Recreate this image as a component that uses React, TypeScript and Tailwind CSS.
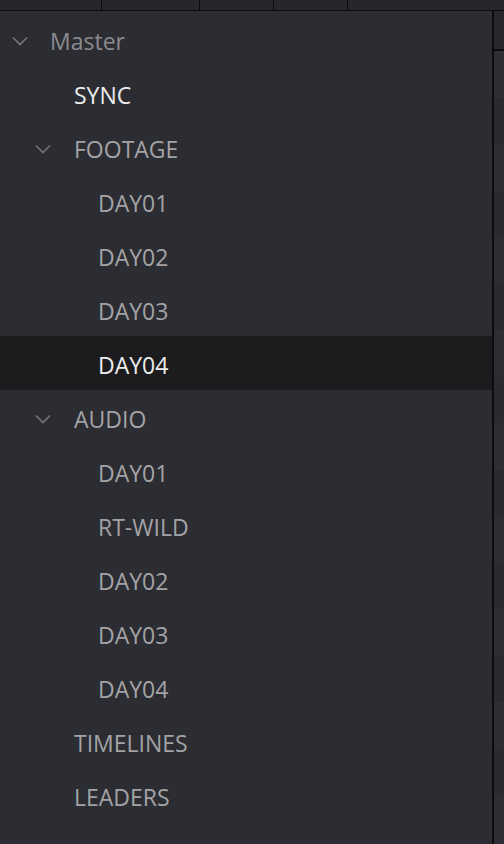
type Item = { label: string; level: number; open?: boolean; active?: boolean; selected?: boolean; dim?: boolean }

const items: Item[] = [
  { label: 'Master', level: 0, open: true, dim: true },
  { label: 'SYNC', level: 1, active: true },
  { label: 'FOOTAGE', level: 1, open: true },
  { label: 'DAY01', level: 2 },
  { label: 'DAY02', level: 2 },
  { label: 'DAY03', level: 2 },
  { label: 'DAY04', level: 2, selected: true },
  { label: 'AUDIO', level: 1, open: true },
  { label: 'DAY01', level: 2 },
  { label: 'RT-WILD', level: 2 },
  { label: 'DAY02', level: 2 },
  { label: 'DAY03', level: 2 },
  { label: 'DAY04', level: 2 },
  { label: 'TIMELINES', level: 1 },
  { label: 'LEADERS', level: 1 },
]

const Chevron = () => (
  <svg width="16" height="10" viewBox="0 0 16 10" fill="none">
    <path d="M1 1.5L8 8.5L15 1.5" stroke="#76767b" strokeWidth="1.6" />
  </svg>
)

const padFor = ['pl-[50px]', 'pl-[74px]', 'pl-[98px]']
const chevFor = ['left-[12px]', 'left-[35px]', 'left-[59px]']

export default function App() {
  return (
    <div className="flex h-[844px] w-[504px] flex-col overflow-hidden bg-[#2c2c33]" style={{ fontFamily: '"Open Sans", sans-serif' }}>
      {/* column header strip */}
      <div className="flex h-[11px] shrink-0 border-b border-[#0c0c0e] bg-[#27262b]">
        <div className="w-[102px] border-r border-[#0c0c0e]" />
        <div className="w-[98px] border-r border-[#0c0c0e]" />
        <div className="w-[74px] border-r border-[#0c0c0e]" />
        <div className="w-[74px] border-r border-[#0c0c0e]" />
        <div className="flex-1" />
      </div>

      <div className="flex flex-1">
        <div className="flex-1 pt-px">
          {items.map((it, i) => (
            <div
              key={i}
              className={`relative flex h-[54px] items-center ${padFor[it.level]} ${it.selected ? 'bg-[#1c1c1f]' : ''}`}
            >
              {it.open && (
                <span className={`absolute top-[24px] ${chevFor[it.level]}`}>
                  <Chevron />
                </span>
              )}
              <span
                className={`mt-[5px] text-[23px] font-medium leading-none ${
                  it.selected || it.active ? 'text-[#ececec]' : it.dim ? 'text-[#8b8b8f]' : 'text-[#a3a3a6]'
                }`}
              >
                {it.label}
              </span>
            </div>
          ))}
        </div>

        {/* side list edge */}
        <div className="flex w-[12px] flex-col border-l-2 border-[#0c0c0e]">
          <div className="h-[40px] border-b-2 border-[#0c0c0e] bg-[#29282e]" />
          {Array.from({ length: 17 }).map((_, i) => (
            <div key={i} className={`h-[46.5px] shrink-0 ${i % 2 === 0 ? 'bg-[#2e2e35]' : 'bg-[#2a2a30]'}`} />
          ))}
        </div>
      </div>
    </div>
  )
}
